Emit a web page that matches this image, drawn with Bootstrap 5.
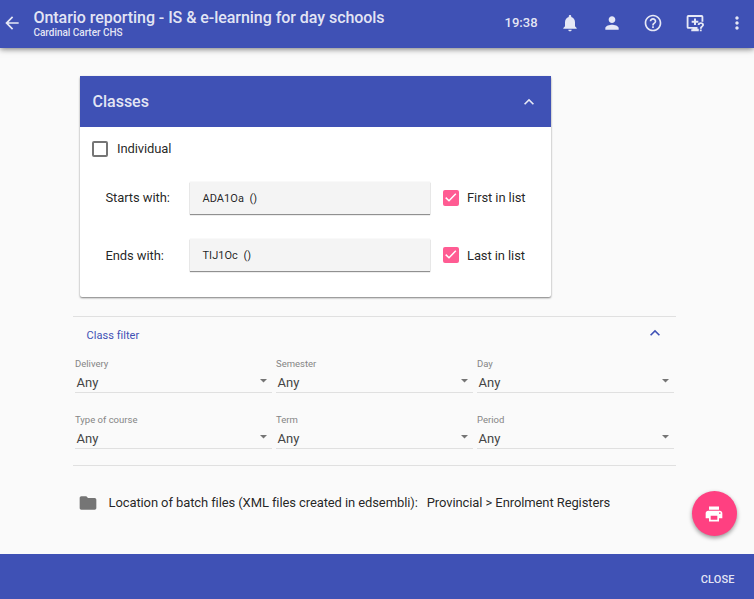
<!DOCTYPE html>
<html lang="en">
<head>
<meta charset="utf-8">
<meta name="viewport" content="width=device-width, initial-scale=1">
<title>Ontario reporting</title>
<link href="https://cdn.jsdelivr.net/npm/bootstrap@5.3.0/dist/css/bootstrap.min.css" rel="stylesheet">
<style>
body{font-family:Roboto,sans-serif;font-size:13px;line-height:20px;color:rgba(0,0,0,.87);background:#fafafa;height:599px;overflow:hidden}
svg{display:block;fill:currentColor;flex:none}
.indigo{background:#3f51b5;color:rgba(255,255,255,.87)}
.topbar{height:48px;padding:0 7.500px 0 2px;box-shadow:0 1px 6px rgba(0,0,0,.55);z-index:2}
.back{margin-top:-3px}
.heading{margin-left:11.500px}
.app-title{font-size:16px;font-weight:500;line-height:20px;margin:0;padding-top:8px;letter-spacing:-.05px}
.app-sub{font-size:10px;font-weight:500;line-height:10px;letter-spacing:-.03px}
.clock{font-size:13px;font-weight:500;margin-right:1px}
.tools{gap:21.600px;margin-top:-3px}
.panel{width:471px;height:221px;margin:28px 0 0 80px;border:0;border-radius:2px;background:#fff;box-shadow:0 1px 2px rgba(0,0,0,.5)}
.panel-head{height:51px;padding:0 12px 0 12.500px;font-size:16px;font-weight:500}
.panel-rows{padding:12px 0 0 12px}
.box{width:16px;height:16px;border:2px solid #757575;border-radius:2px;margin-right:9px}
.box.on{border:0;background:#ff5c93;color:#fff;margin-right:8px}
.individual{margin-bottom:23px;letter-spacing:-.12px}
.range{height:32px;padding-left:13.500px;letter-spacing:-.1px}
.range + .range{margin-top:25px}
.range + .range > span{padding-top:1px}
.range + .range > .box{padding-top:0}
.range-label{width:84px}
.field{width:240.500px;height:32px;padding-left:13px;margin-right:13px;background:#f4f4f4;font-size:11px;letter-spacing:.04px;box-shadow:0 1px 1px rgba(0,0,0,.42),0 0 1px rgba(0,0,0,.14);white-space:pre}
.field span{padding-top:1px}
.filters{width:603px;height:150px;margin:19px 0 0 73px;border:solid #e0e0e0;border-width:1px 0}
.filter-head{height:37px;padding:0 11px 0 13.500px;color:#3f51b5;font-size:11px;letter-spacing:.04px}
.filter-head svg{margin-top:-6px}
.filter-grid{display:grid;grid-template-columns:197px 197px 197px;column-gap:4px;row-gap:17px;padding-left:2px}
.pick{height:39px;border-bottom:1px solid #e0e0e0}
.pick-label{font-size:9.500px;line-height:14px;color:#858585;padding-top:3px}
.pick-value{font-size:13px;line-height:18px;padding:3px 5.500px 0 1.500px;color:#444}
.location{margin:27px 0 0 78px;letter-spacing:-.1px}
.location svg{color:#757575;margin-right:10.500px}
.location-path{margin-left:9px}
.fab{width:45px;height:45px;border-radius:50%;background:#ff4081;right:17px;top:491px;padding:0 2px 0 0;box-shadow:0 2px 4px rgba(0,0,0,.4)}
.fab svg{color:#fff}
.footer-bar{height:45px;padding:6px 19.500px 0 0;font-size:11px;font-weight:500;letter-spacing:.1px}
</style>
<script src="https://cdn.jsdelivr.net/npm/bootstrap@5.3.0/dist/js/bootstrap.bundle.min.js"></script>
</head>
<body class="d-flex flex-column position-relative">
<header class="topbar indigo d-flex align-items-center flex-shrink-0">
  <svg class="back" width="20" height="20" viewBox="0 0 24 24"><path d="M20 11H7.830l5.590-5.590L12 4l-8 8 8 8 1.410-1.410L7.830 13H20v-2z"/></svg>
  <div class="heading align-self-start">
    <h1 class="app-title">Ontario reporting - IS &amp; e-learning for day schools</h1>
    <div class="app-sub">Cardinal Carter CHS</div>
  </div>
  <div class="tools d-flex align-items-center ms-auto">
    <span class="clock">19:38</span>
    <svg width="20" height="20" viewBox="0 0 24 24"><path d="M12 22c1.100 0 2-.9 2-2h-4c0 1.100.9 2 2 2zm6-6v-5c0-3.070-1.630-5.640-4.500-6.320V4c0-.83-.67-1.500-1.500-1.500s-1.500.67-1.500 1.500v.68C7.640 5.360 6 7.920 6 11v5l-2 2v1h16v-1l-2-2z"/></svg>
    <svg width="20" height="20" viewBox="0 0 24 24"><path d="M12 12c2.210 0 4-1.790 4-4s-1.790-4-4-4-4 1.790-4 4 1.790 4 4 4zm0 2c-2.670 0-8 1.340-8 4v2h16v-2c0-2.660-5.330-4-8-4z"/></svg>
    <svg width="20" height="20" viewBox="0 0 24 24"><path d="M11 18h2v-2h-2v2zm1-16C6.480 2 2 6.480 2 12s4.480 10 10 10 10-4.480 10-10S17.520 2 12 2zm0 18c-4.410 0-8-3.590-8-8s3.590-8 8-8 8 3.590 8 8-3.590 8-8 8zm0-14c-2.210 0-4 1.790-4 4h2c0-1.100.9-2 2-2s2 .9 2 2c0 2-3 1.750-3 5h2c0-2.250 3-2.500 3-5 0-2.210-1.790-4-4-4z"/></svg>
    <svg width="20" height="20" viewBox="0 0 24 24"><path d="M4 2.500h16a2 2 0 0 1 2 2v6h-2.200V4.700H4.200v12.100H15V19h1.500v3H7.500v-2.500H9V19H4a2 2 0 0 1-2-2V4.500a2 2 0 0 1 2-2zM10.800 6.500h2.400v2.800H16v2.400h-2.800v2.800h-2.400v-2.800H8V9.300h2.800zM17.800 19.800H20V22h-2.200zM15.200 14.400c0-2 1.600-3.200 3.800-3.200s3.800 1.200 3.800 3.200c0 2.100-2.700 2.400-2.700 4.400h-2.300c0-2.900 2.700-3.200 2.700-4.400 0-.7-.6-1.100-1.500-1.100s-1.500.4-1.500 1.100z"/></svg>
    <svg width="20" height="20" viewBox="0 0 24 24"><path d="M12 8c1.100 0 2-.9 2-2s-.9-2-2-2-2 .9-2 2 .9 2 2 2zm0 2c-1.100 0-2 .9-2 2s.9 2 2 2 2-.9 2-2-.9-2-2-2zm0 6c-1.100 0-2 .9-2 2s.9 2 2 2 2-.9 2-2-.9-2-2-2z"/></svg>
  </div>
</header>

<section class="panel card flex-shrink-0">
  <div class="panel-head indigo d-flex align-items-center justify-content-between">
    <span>Classes</span>
    <svg width="20" height="20" viewBox="0 0 24 24"><path d="M12 8l-6 6 1.410 1.410L12 10.830l4.590 4.580L18 14z"/></svg>
  </div>
  <div class="panel-rows">
    <div class="individual d-flex align-items-center"><span class="box"></span>Individual</div>
    <div class="range d-flex align-items-center">
      <span class="range-label">Starts with:</span><div class="field d-flex align-items-center"><span>ADA1Oa  ()</span></div>
      <span class="box on"><svg width="16" height="16" viewBox="0 0 16 16"><path d="M2.700 7.600l3.300 3.200 6.800-7" fill="none" stroke="currentColor" stroke-width="1.500"/></svg></span><span>First in list</span>
    </div>
    <div class="range d-flex align-items-center">
      <span class="range-label">Ends with:</span><div class="field d-flex align-items-center"><span>TIJ1Oc  ()</span></div>
      <span class="box on"><svg width="16" height="16" viewBox="0 0 16 16"><path d="M2.700 7.600l3.300 3.200 6.800-7" fill="none" stroke="currentColor" stroke-width="1.500"/></svg></span><span>Last in list</span>
    </div>
  </div>
</section>

<section class="filters flex-shrink-0">
  <div class="filter-head d-flex align-items-center justify-content-between"><span>Class filter</span>
    <svg width="20" height="20" viewBox="0 0 24 24"><path d="M12 8l-6 6 1.410 1.410L12 10.830l4.590 4.580L18 14z"/></svg>
  </div>
  <div class="filter-grid">
    <div class="pick"><div class="pick-label">Delivery</div><div class="pick-value d-flex justify-content-between">Any<svg width="7" height="14"><path d="M0 5h7L3.500 8.500z" fill="#757575"/></svg></div></div>
    <div class="pick"><div class="pick-label">Semester</div><div class="pick-value d-flex justify-content-between">Any<svg width="7" height="14"><path d="M0 5h7L3.500 8.500z" fill="#757575"/></svg></div></div>
    <div class="pick"><div class="pick-label">Day</div><div class="pick-value d-flex justify-content-between">Any<svg width="7" height="14"><path d="M0 5h7L3.500 8.500z" fill="#757575"/></svg></div></div>
    <div class="pick"><div class="pick-label">Type of course</div><div class="pick-value d-flex justify-content-between">Any<svg width="7" height="14"><path d="M0 5h7L3.500 8.500z" fill="#757575"/></svg></div></div>
    <div class="pick"><div class="pick-label">Term</div><div class="pick-value d-flex justify-content-between">Any<svg width="7" height="14"><path d="M0 5h7L3.500 8.500z" fill="#757575"/></svg></div></div>
    <div class="pick"><div class="pick-label">Period</div><div class="pick-value d-flex justify-content-between">Any<svg width="7" height="14"><path d="M0 5h7L3.500 8.500z" fill="#757575"/></svg></div></div>
  </div>
</section>

<div class="location d-flex align-items-center"><svg width="20" height="20" viewBox="0 0 24 24"><path d="M10 4H4c-1.100 0-1.990.9-1.990 2L2 18c0 1.100.9 2 2 2h16c1.100 0 2-.9 2-2V8c0-1.100-.9-2-2-2h-8l-2-2z"/></svg><span>Location of batch files (XML files created in edsembli):</span><span class="location-path">Provincial &gt; Enrolment Registers</span></div>

<button class="fab btn border-0 position-absolute d-flex align-items-center justify-content-center" aria-label="Print"><svg width="20" height="20" viewBox="0 0 24 24"><path d="M19 8H5c-1.660 0-3 1.340-3 3v6h4v4h12v-4h4v-6c0-1.660-1.340-3-3-3zm-3 11H8v-5h8v5zm3-7c-.55 0-1-.45-1-1s.45-1 1-1 1 .45 1 1-.45 1-1 1zm-1-9H6v4h12V3z"/></svg></button>

<footer class="footer-bar indigo mt-auto d-flex align-items-center justify-content-end flex-shrink-0">CLOSE</footer>
</body>
</html>
